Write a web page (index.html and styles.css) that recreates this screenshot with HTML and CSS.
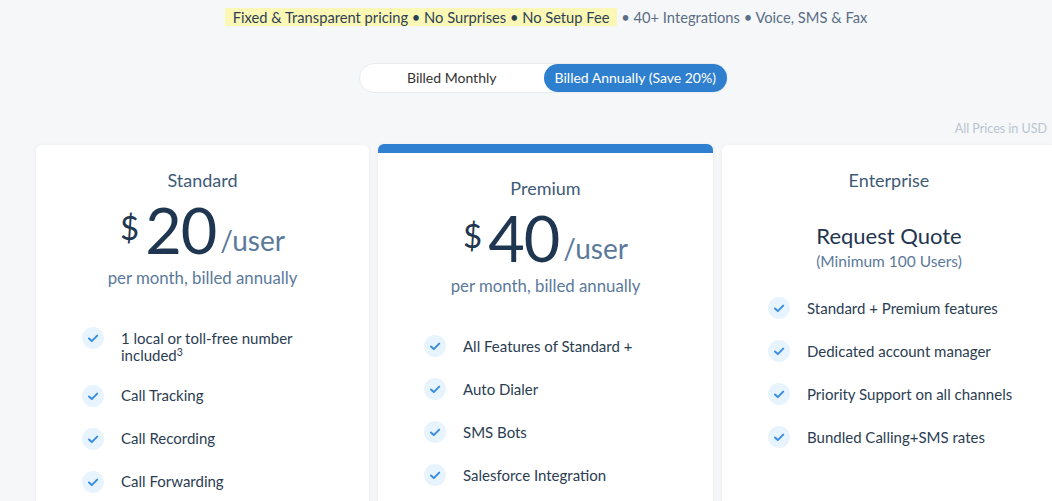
FILE: index.html
```html
<!DOCTYPE html>
<html lang="en">
<head>
<meta charset="utf-8">
<title>Pricing</title>
<link rel="stylesheet" href="styles.css">
</head>
<body>
<div class="page">
  <p class="tagline"><span class="hl">Fixed &amp; Transparent pricing • No Surprises • No Setup Fee</span> • 40+ Integrations • Voice, SMS &amp; Fax</p>

  <div class="toggle">
    <span class="opt">Billed Monthly</span>
    <span class="opt active">Billed Annually (Save 20%)</span>
  </div>

  <p class="usd">All Prices in USD</p>

  <div class="cards">
    <div class="card">
      <h3 class="plan">Standard</h3>
      <div class="price"><span class="cur">$</span><span class="amt">20</span><span class="per">/user</span></div>
      <p class="note">per month, billed annually</p>
      <ul class="feats">
        <li><span class="chk"><svg viewBox="0 0 22 22"><path d="M7 11.5l2.8 2.6L15.2 8.6"/></svg></span><span class="ft">1 local or toll-free number included<sup>3</sup></span></li>
        <li><span class="chk"><svg viewBox="0 0 22 22"><path d="M7 11.5l2.8 2.6L15.2 8.6"/></svg></span><span class="ft">Call Tracking</span></li>
        <li><span class="chk"><svg viewBox="0 0 22 22"><path d="M7 11.5l2.8 2.6L15.2 8.6"/></svg></span><span class="ft">Call Recording</span></li>
        <li><span class="chk"><svg viewBox="0 0 22 22"><path d="M7 11.5l2.8 2.6L15.2 8.6"/></svg></span><span class="ft">Call Forwarding</span></li>
      </ul>
    </div>

    <div class="card featured">
      <h3 class="plan">Premium</h3>
      <div class="price"><span class="cur">$</span><span class="amt">40</span><span class="per">/user</span></div>
      <p class="note">per month, billed annually</p>
      <ul class="feats">
        <li><span class="chk"><svg viewBox="0 0 22 22"><path d="M7 11.5l2.8 2.6L15.2 8.6"/></svg></span><span class="ft">All Features of Standard +</span></li>
        <li><span class="chk"><svg viewBox="0 0 22 22"><path d="M7 11.5l2.8 2.6L15.2 8.6"/></svg></span><span class="ft">Auto Dialer</span></li>
        <li><span class="chk"><svg viewBox="0 0 22 22"><path d="M7 11.5l2.8 2.6L15.2 8.6"/></svg></span><span class="ft">SMS Bots</span></li>
        <li><span class="chk"><svg viewBox="0 0 22 22"><path d="M7 11.5l2.8 2.6L15.2 8.6"/></svg></span><span class="ft">Salesforce Integration</span></li>
      </ul>
    </div>

    <div class="card enterprise">
      <h3 class="plan">Enterprise</h3>
      <p class="quote">Request Quote</p>
      <p class="min">(Minimum 100 Users)</p>
      <ul class="feats">
        <li><span class="chk"><svg viewBox="0 0 22 22"><path d="M7 11.5l2.8 2.6L15.2 8.6"/></svg></span><span class="ft">Standard + Premium features</span></li>
        <li><span class="chk"><svg viewBox="0 0 22 22"><path d="M7 11.5l2.8 2.6L15.2 8.6"/></svg></span><span class="ft">Dedicated account manager</span></li>
        <li><span class="chk"><svg viewBox="0 0 22 22"><path d="M7 11.5l2.8 2.6L15.2 8.6"/></svg></span><span class="ft">Priority Support on all channels</span></li>
        <li><span class="chk"><svg viewBox="0 0 22 22"><path d="M7 11.5l2.8 2.6L15.2 8.6"/></svg></span><span class="ft">Bundled Calling+SMS rates</span></li>
      </ul>
    </div>
  </div>
</div>
</body>
</html>
```

FILE: styles.css
```css
html, body {
  margin: 0;
  padding: 0;
  background: #f6f7f9;
  overflow: hidden;
  height: 501px;
}
body {
  font-family: Lato, "Noto Sans", sans-serif;
  color: #2b3d52;
}
.page {
  width: 1020px;
  margin-left: 36px;
  padding-top: 8px;
}
.tagline {
  margin: 0;
  text-align: center;
  font-size: 14.7px;
  line-height: 19px;
  color: #5a6e85;
}
.hl {
  background: #fbf8b6;
  color: #2e3f55;
  padding: 0 8px;
}
.toggle {
  margin: 36px 0 0 323px;
  width: 369px;
  height: 30px;
  box-sizing: border-box;
  background: #fff;
  border: 1px solid #e8ebef;
  border-radius: 15px;
  display: flex;
  align-items: center;
}
.opt {
  flex: 1;
  text-align: center;
  font-size: 14px;
  color: #333;
  line-height: 28px;
  height: 28px;
  border-radius: 14px;
}
.opt.active {
  background: #2f7fcf;
  color: #fff;
}
.usd {
  margin: 28px 0 0;
  padding-right: 9px;
  text-align: right;
  font-size: 12.5px;
  line-height: 16px;
  color: #b9c4d2;
}
.cards {
  margin-top: 8px;
  display: grid;
  grid-template-columns: 333px 335px 334px;
  gap: 9px;
  align-items: start;
}
.card {
  background: #fff;
  border-radius: 6px;
  box-shadow: 0 1px 4px rgba(40, 60, 90, 0.07);
  height: 420px;
  padding-top: 24px;
  box-sizing: border-box;
  text-align: center;
}
.card.featured {
  margin-top: -1px;
  border-top: 9px solid #2f80d1;
  padding-top: 24px;
}
.plan {
  margin: 0;
  font-weight: 400;
  font-size: 18px;
  line-height: 22px;
  color: #3e5a78;
}
.price {
  margin-top: 6px;
  height: 60px;
  line-height: 60px;
  color: #1f3650;
  white-space: nowrap;
}
.cur {
  font-size: 33px;
  vertical-align: 14px;
  margin-right: 6px;
}
.amt {
  font-size: 63px;
  letter-spacing: -1px;
}
.per {
  font-size: 28px;
  color: #5b7a9b;
  margin-left: 4px;
  vertical-align: 3px;
}
.note {
  margin: 11px 0 0;
  font-size: 16.8px;
  line-height: 20px;
  color: #5b7a9b;
}
.quote {
  margin: 31px 0 0;
  font-size: 22px;
  line-height: 28px;
  color: #1f3650;
}
.min {
  margin: 1px 0 0;
  font-size: 15.5px;
  line-height: 20px;
  color: #5b7a9b;
}
.feats {
  list-style: none;
  margin: 39px 0 0;
  padding: 0 36px 0 46px;
  text-align: left;
  display: flex;
  flex-direction: column;
  gap: 21px;
}
.enterprise .feats {
  margin-top: 26px;
}
.feats li {
  display: flex;
  align-items: flex-start;
  gap: 17px;
}
.chk {
  flex: none;
  width: 22px;
  height: 22px;
  border-radius: 50%;
  background: #e8f4fd;
}
.chk svg {
  width: 22px;
  height: 22px;
  display: block;
  fill: none;
  stroke: #3a8ee2;
  stroke-width: 2;
  stroke-linecap: round;
  stroke-linejoin: round;
}
.ft {
  padding-top: 2.5px;
  font-size: 15px;
  line-height: 17px;
  color: #2b3d52;
}
.ft sup {
  font-size: 10.5px;
  line-height: 0;
  vertical-align: 5px;
}
```
